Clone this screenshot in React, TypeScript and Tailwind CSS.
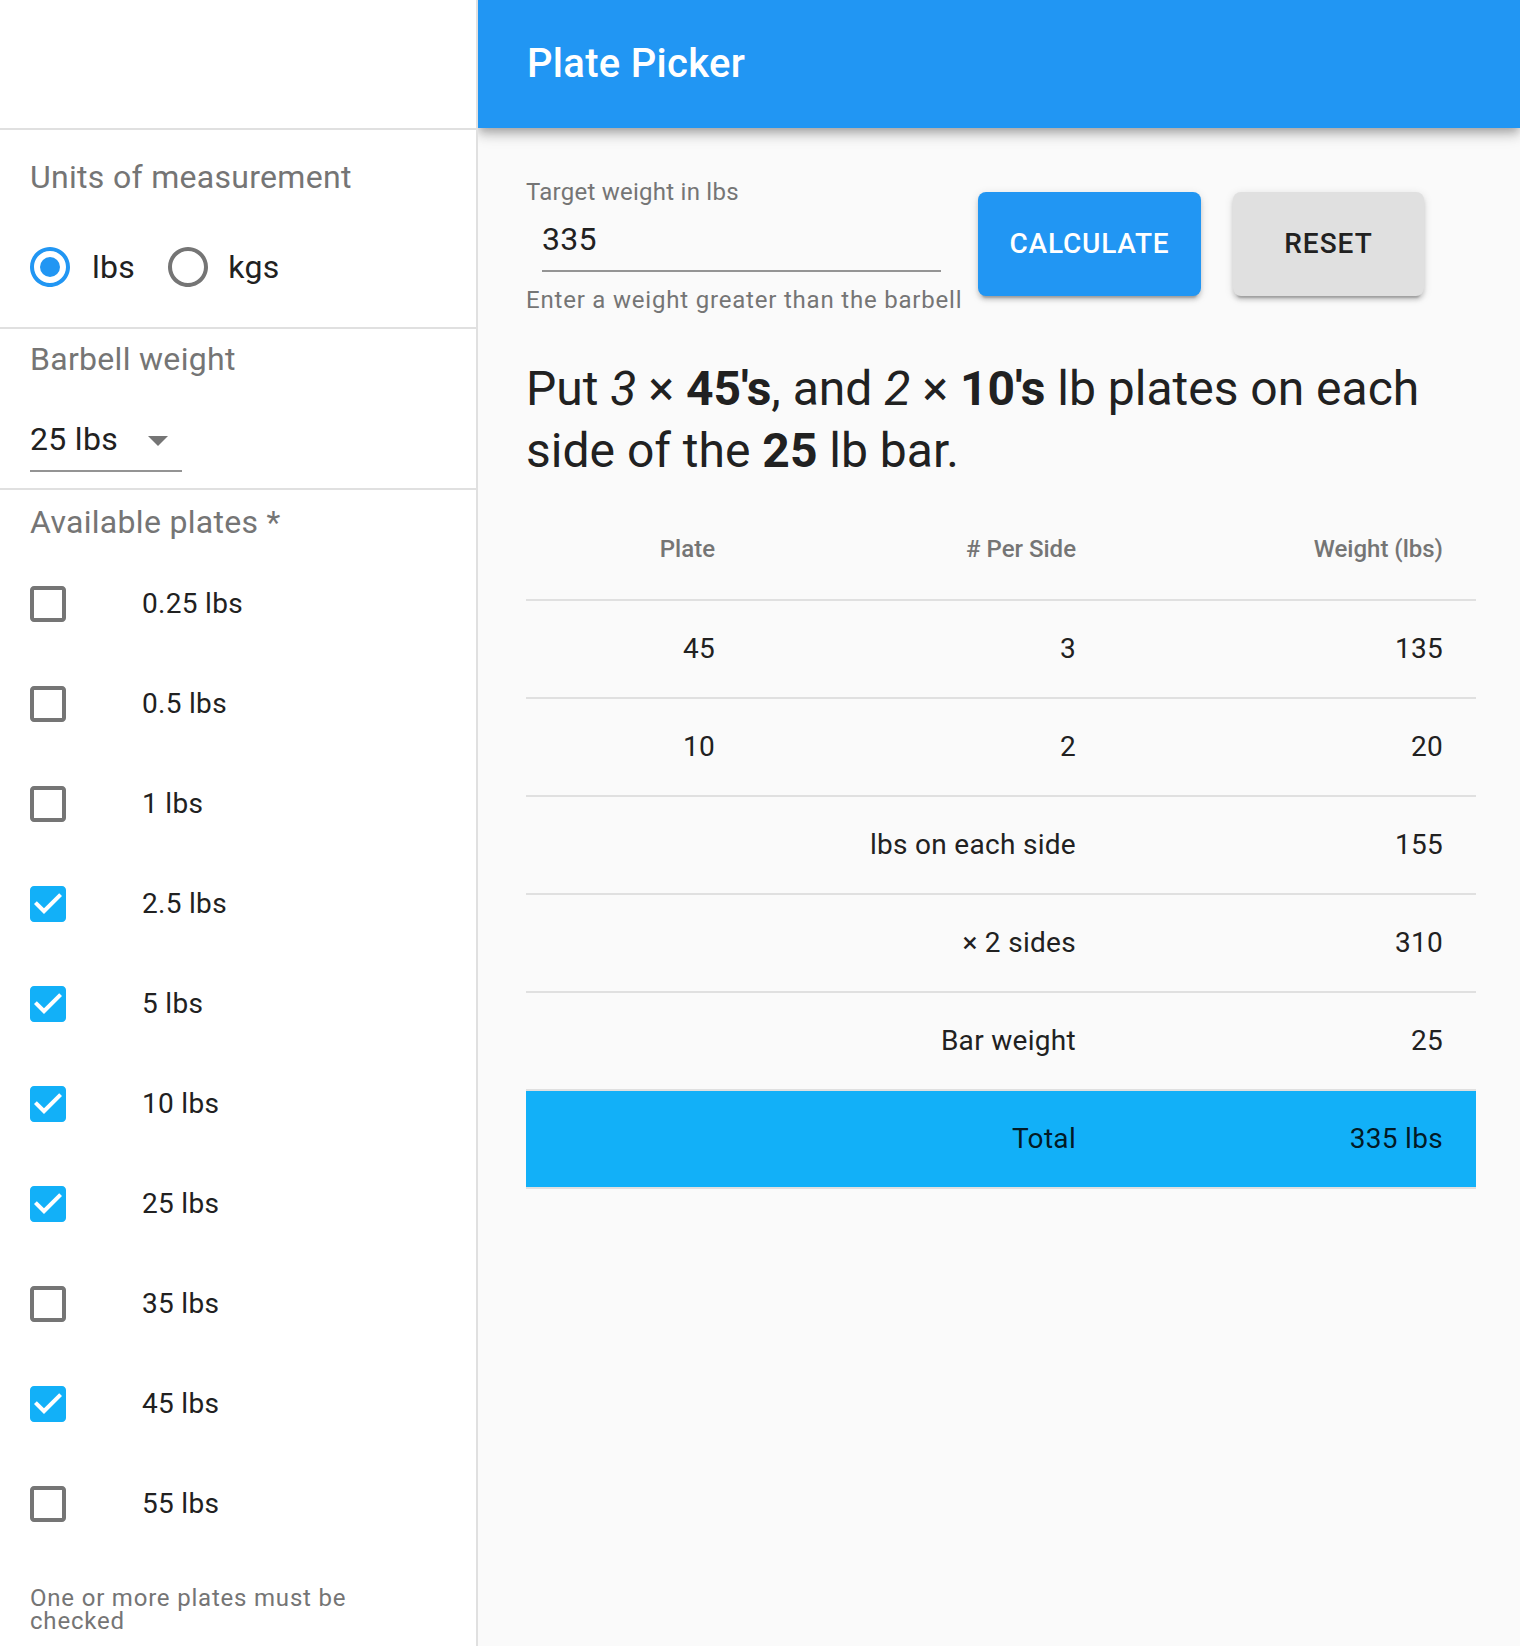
import React from "react";

const plates = [
  { label: "0.25 lbs", checked: false },
  { label: "0.5 lbs", checked: false },
  { label: "1 lbs", checked: false },
  { label: "2.5 lbs", checked: true },
  { label: "5 lbs", checked: true },
  { label: "10 lbs", checked: true },
  { label: "25 lbs", checked: true },
  { label: "35 lbs", checked: false },
  { label: "45 lbs", checked: true },
  { label: "55 lbs", checked: false },
];

const rows = [
  { plate: "45", count: "3", weight: "135" },
  { plate: "10", count: "2", weight: "20" },
  { plate: "", count: "lbs on each side", weight: "155" },
  { plate: "", count: "× 2 sides", weight: "310" },
  { plate: "", count: "Bar weight", weight: "25" },
];

function Radio({ checked }: { checked: boolean }) {
  return (
    <svg viewBox="0 0 24 24" className="w-12 h-12 shrink-0" fill={checked ? "#2196f3" : "#757575"}>
      <path d="M12 2C6.48 2 2 6.48 2 12s4.48 10 10 10 10-4.48 10-10S17.52 2 12 2zm0 18c-4.42 0-8-3.58-8-8s3.58-8 8-8 8 3.58 8 8-3.58 8-8 8z" />
      {checked && <circle cx="12" cy="12" r="5" />}
    </svg>
  );
}

function Checkbox({ checked }: { checked: boolean }) {
  return checked ? (
    <svg viewBox="0 0 24 24" className="w-12 h-12 shrink-0" fill="#12b0f8">
      <path d="M19 3H5c-1.11 0-2 .9-2 2v14c0 1.1.89 2 2 2h14c1.11 0 2-.9 2-2V5c0-1.1-.89-2-2-2zm-9 14l-5-5 1.41-1.41L10 14.17l7.59-7.59L19 8l-9 9z" />
    </svg>
  ) : (
    <svg viewBox="0 0 24 24" className="w-12 h-12 shrink-0" fill="#757575">
      <path d="M19 5v14H5V5h14m0-2H5c-1.1 0-2 .9-2 2v14c0 1.1.9 2 2 2h14c1.1 0 2-.9 2-2V5c0-1.1-.9-2-2-2z" />
    </svg>
  );
}

export default function App() {
  return (
    <div className="flex h-[1646px] overflow-hidden bg-[#fafafa] font-['Roboto',sans-serif]">
      {/* drawer */}
      <aside className="relative z-10 w-[478px] shrink-0 border-r-2 border-[#e0e0e0] bg-white">
        <div className="h-[130px] border-b-2 border-[#e0e0e0]" />

        <section className="pl-[30px] pt-[31px] pb-[36px] border-b-2 border-[#e0e0e0]">
          <div className="text-[32px] leading-[32px] tracking-[0.3px] text-[#757575]">Units of measurement</div>
          <div className="mt-[50px] flex items-center h-[48px] text-[32px] tracking-[0.3px] text-[#212121]">
            <div className="flex items-center -ml-[4px]">
              <Radio checked />
              <span className="ml-[18px]">lbs</span>
            </div>
            <div className="flex items-center ml-[29px]">
              <Radio checked={false} />
              <span className="ml-[16px]">kgs</span>
            </div>
          </div>
        </section>

        <section className="pl-[30px] pt-[14px] pb-[16px] border-b-2 border-[#e0e0e0]">
          <div className="text-[32px] leading-[32px] tracking-[0.3px] text-[#757575]">Barbell weight</div>
          <div className="mt-[48px] w-[152px] pb-[15px] border-b-2 border-[#949494] flex items-center justify-between pr-[14px]">
            <span className="text-[32px] leading-[32px] tracking-[0.3px] text-[#212121]">25 lbs</span>
            <svg viewBox="7 10 10 5" className="w-[20px] h-[10px] mt-[4px]" fill="#757575">
              <path d="M7 10l5 5 5-5z" />
            </svg>
          </div>
        </section>

        <section className="pl-[30px] pt-[16px]">
          <div className="text-[32px] leading-[32px] tracking-[0.3px] text-[#757575]">Available plates *</div>
          <ul className="mt-[16px]">
            {plates.map((p) => (
              <li key={p.label} className="h-[100px] flex items-center">
                <div className="w-[112px] -ml-[6px]">
                  <Checkbox checked={p.checked} />
                </div>
                <span className="ml-[6px] text-[28px] text-[#212121] tracking-[0.3px]">{p.label}</span>
              </li>
            ))}
          </ul>
          <p className="mt-[33px] w-[340px] text-[24px] leading-[23px] tracking-[0.8px] text-[#757575]">
            One or more plates must be checked
          </p>
        </section>
      </aside>

      {/* main */}
      <main className="flex-1">
        <header className="h-[128px] bg-[#2196f3] flex items-center pl-[49px] shadow-[0_4px_8px_-2px_rgba(0,0,0,0.2),0_8px_10px_0_rgba(0,0,0,0.14),0_2px_20px_0_rgba(0,0,0,0.12)]">
          <h1 className="text-[40px] font-medium text-white tracking-[0.3px]">Plate Picker</h1>
        </header>

        <div className="pl-[48px] pt-[52px] w-[998px]">
          <div className="flex items-start">
            <div className="w-[435px]">
              <label className="block text-[24px] leading-[24px] tracking-[0.25px] text-[#757575]">Target weight in lbs</label>
              <div className="ml-[16px] w-[399px] mt-[15px] pb-[11px] border-b-2 border-[#949494] text-[32px] leading-[40px] tracking-[0.3px] text-[#212121]">
                335
              </div>
              <p className="mt-[16px] text-[24px] leading-[24px] tracking-[0.8px] text-[#757575] whitespace-nowrap">
                Enter a weight greater than the barbell
              </p>
            </div>
            <button className="ml-[17px] mt-[12px] w-[223px] h-[104px] rounded-[8px] bg-[#2196f3] text-white text-[28px] font-medium tracking-[0.8px] uppercase shadow-[0_6px_2px_-4px_rgba(0,0,0,0.2),0_4px_4px_0_rgba(0,0,0,0.14),0_2px_10px_0_rgba(0,0,0,0.12)]">
              Calculate
            </button>
            <button className="ml-[32px] mt-[12px] w-[191px] h-[104px] rounded-[8px] bg-[#e0e0e0] text-[#212121] text-[28px] font-medium tracking-[1px] uppercase shadow-[0_6px_2px_-4px_rgba(0,0,0,0.2),0_4px_4px_0_rgba(0,0,0,0.14),0_2px_10px_0_rgba(0,0,0,0.12)]">
              Reset
            </button>
          </div>

          <p className="mt-[46px] text-[48px] leading-[62px] text-[#212121]">
            Put <i>3</i> × <b className="font-bold">45's</b>, and <i>2</i> × <b className="font-bold">10's</b> lb plates on each side of the{" "}
            <b className="font-bold">25</b> lb bar.
          </p>

          <div className="mt-[5px] w-[950px]">
            <div className="grid grid-cols-[221px_361px_368px] h-[114px] border-b-2 border-[#e0e0e0] text-[24px] leading-[24px] font-medium text-[#757575] pt-[50px]">
              <div className="text-right pr-[32px]">Plate</div>
              <div className="text-right pr-[32px]">#&nbsp;Per Side</div>
              <div className="text-right pr-[33px]">Weight (lbs)</div>
            </div>
            {rows.map((r) => (
              <div
                key={r.count}
                className="grid grid-cols-[221px_361px_368px] h-[98px] items-center border-b-2 border-[#e0e0e0] text-[28px] tracking-[0.3px] text-[#212121]"
              >
                <div className="text-right pr-[32px]">{r.plate}</div>
                <div className="text-right pr-[32px]">{r.count}</div>
                <div className="text-right pr-[33px]">{r.weight}</div>
              </div>
            ))}
            <div className="grid grid-cols-[221px_361px_368px] h-[98px] items-center bg-[#12b0f8] border-b-2 border-[#e0e0e0] text-[28px] tracking-[0.3px] text-black/[0.87]">
              <div />
              <div className="text-right pr-[32px]">Total</div>
              <div className="text-right pr-[33px]">335 lbs</div>
            </div>
          </div>
        </div>
      </main>
    </div>
  );
}
